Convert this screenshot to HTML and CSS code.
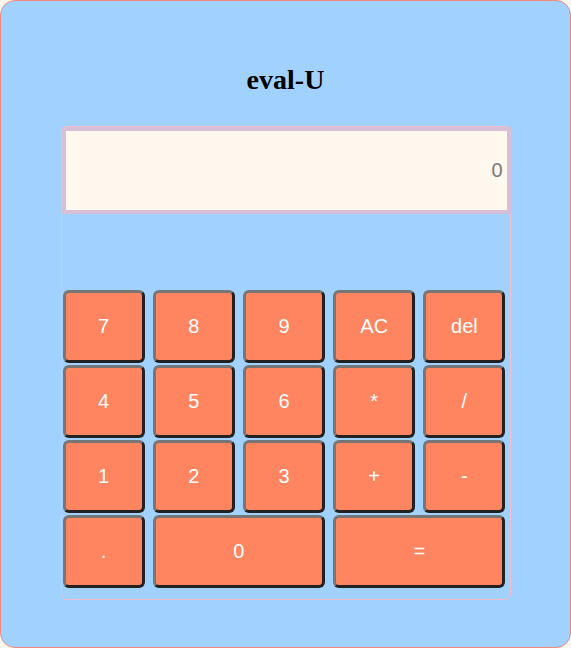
FILE: index.html
```html
<!DOCTYPE html>
<html>
<head>
<meta charset="utf-8">
<title>eval-U</title>
<link rel="stylesheet" href="styles.css">
</head>
<body>
<div class="app">
  <h1 class="title">eval-U</h1>
  <div class="calculator">
    <div class="display">0</div>
    <div class="keys">
      <button class="key">7</button>
      <button class="key">8</button>
      <button class="key">9</button>
      <button class="key">AC</button>
      <button class="key">del</button>
      <button class="key">4</button>
      <button class="key">5</button>
      <button class="key">6</button>
      <button class="key">*</button>
      <button class="key">/</button>
      <button class="key">1</button>
      <button class="key">2</button>
      <button class="key">3</button>
      <button class="key">+</button>
      <button class="key">-</button>
      <button class="key">.</button>
      <button class="key wide">0</button>
      <button class="key wide">=</button>
    </div>
  </div>
</div>
</body>
</html>
```

FILE: styles.css
```css
html, body {
  margin: 0;
  padding: 0;
  background: #fff8ef;
}

.app {
  box-sizing: border-box;
  width: 571px;
  height: 648px;
  background: #a1d1ff;
  border: 1px solid #f4887a;
  border-radius: 15px;
  padding-top: 63px;
}

.title {
  margin: 0 0 30px;
  text-align: center;
  font-family: "Liberation Serif", "Times New Roman", serif;
  font-weight: bold;
  font-size: 28px;
  line-height: 32px;
  color: #000;
}

.calculator {
  box-sizing: border-box;
  width: 450px;
  margin: 0 auto;
  padding: 0 4px 11px 1px;
  border: 1px solid #f5bccb;
  border-radius: 6px;
}

.display {
  box-sizing: border-box;
  height: 87px;
  margin: 0 -5px 0 -1px;
  background: #fef8ee;
  border: 4px solid #d8bfd8;
  font-family: "Liberation Sans", Arial, sans-serif;
  font-size: 20px;
  color: #7a7a7a;
  display: flex;
  align-items: center;
  justify-content: flex-end;
  padding-right: 4px;
}

.keys {
  margin-top: 76px;
  display: grid;
  grid-template-columns: repeat(5, 1fr);
  grid-auto-rows: 73px;
  column-gap: 8px;
  row-gap: 2px;
}

.key {
  box-sizing: border-box;
  background: #ff8561;
  border: 3px solid;
  border-color: #767676 #222 #222 #767676;
  border-radius: 6px;
  color: #fff;
  font-family: "Liberation Sans", Arial, sans-serif;
  font-size: 20px;
  padding: 0;
}

.wide {
  grid-column: span 2;
}
```
